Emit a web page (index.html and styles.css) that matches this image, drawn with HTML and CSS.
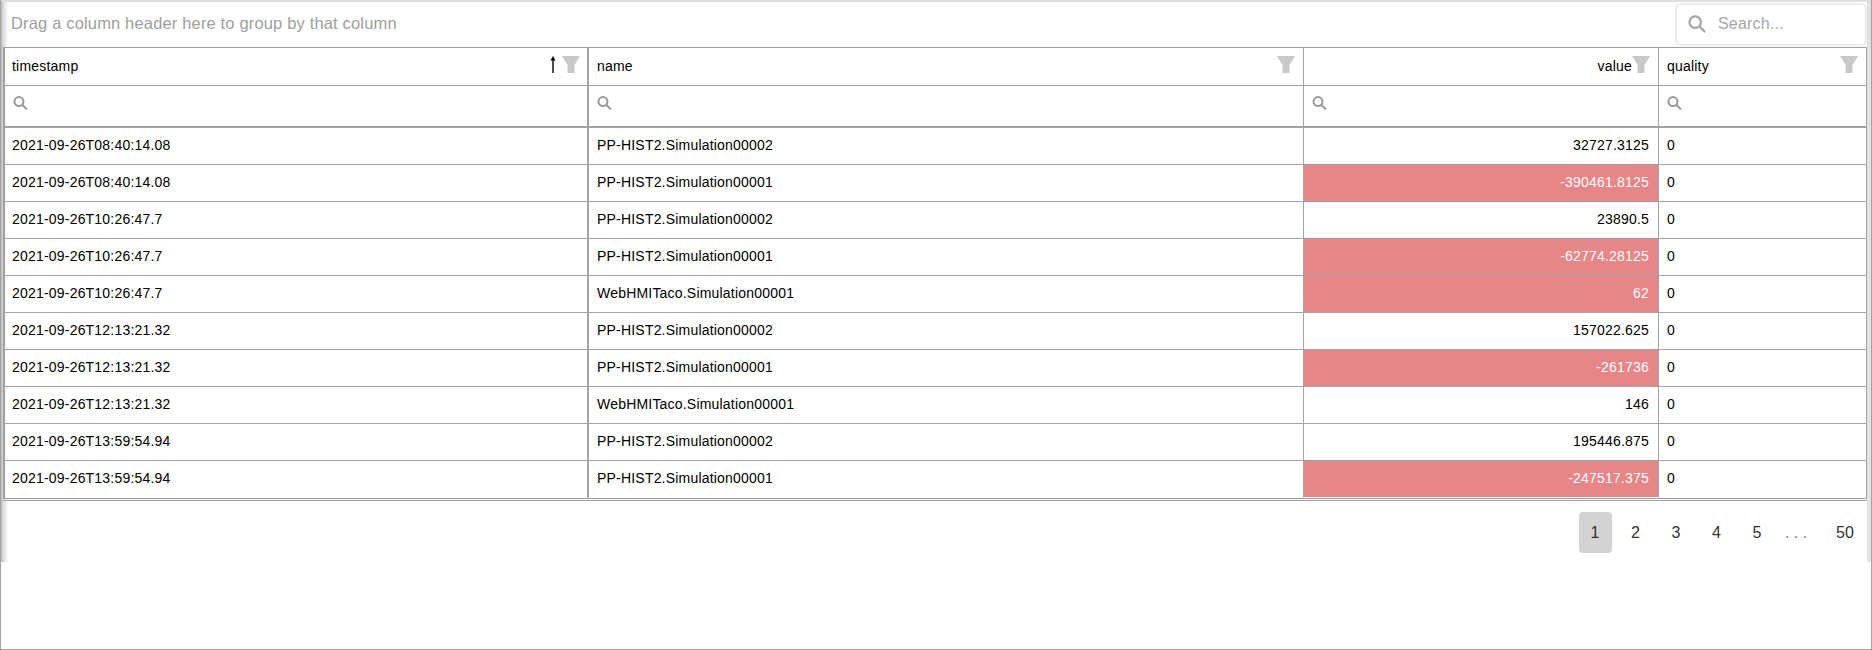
FILE: index.html
```html
<!DOCTYPE html>
<html lang="en">
<head>
<meta charset="utf-8">
<title>Grid</title>
<link rel="stylesheet" href="styles.css">
</head>
<body>
<div class="frame">
  <div class="widget">
    <div class="toolbar">
      <div class="group-hint">Drag a column header here to group by that column</div>
      <div class="search">
        <svg class="search-icon" viewBox="0 0 20 20"><circle cx="8" cy="8" r="6.4"/><path d="M12.6 12.6 19 19"/></svg>
        <span class="placeholder">Search...</span>
      </div>
    </div>
    <table class="grid">
      <colgroup><col class="c1"><col class="c2"><col class="c3"><col class="c4"></colgroup>
      <thead>
        <tr class="head">
          <th><div class="hcell first"><span class="title">timestamp</span><svg class="sort" viewBox="0 0 6 17"><path d="M3 17V3"/><path class="tip" d="M3 0 5.5 4.5H.5Z"/></svg><svg class="funnel" viewBox="0 0 18 17"><path d="M0 0H18L12.5 9V17H5.5V9Z"/></svg></div></th>
          <th><div class="hcell"><span class="title">name</span><svg class="funnel" viewBox="0 0 18 17"><path d="M0 0H18L12.5 9V17H5.5V9Z"/></svg></div></th>
          <th><div class="hcell end"><span class="title">value</span><svg class="funnel" viewBox="0 0 18 17"><path d="M0 0H18L12.5 9V17H5.5V9Z"/></svg></div></th>
          <th><div class="hcell"><span class="title">quality</span><svg class="funnel" viewBox="0 0 18 17"><path d="M0 0H18L12.5 9V17H5.5V9Z"/></svg></div></th>
        </tr>
        <tr class="filters">
          <th><svg class="mini" viewBox="0 0 15 14"><circle cx="6" cy="5.6" r="4.5"/><path d="M9.2 8.8 14 13.4"/></svg></th>
          <th><svg class="mini" viewBox="0 0 15 14"><circle cx="6" cy="5.6" r="4.5"/><path d="M9.2 8.8 14 13.4"/></svg></th>
          <th><svg class="mini" viewBox="0 0 15 14"><circle cx="6" cy="5.6" r="4.5"/><path d="M9.2 8.8 14 13.4"/></svg></th>
          <th><svg class="mini" viewBox="0 0 15 14"><circle cx="6" cy="5.6" r="4.5"/><path d="M9.2 8.8 14 13.4"/></svg></th>
        </tr>
      </thead>
      <tbody>
        <tr><td>2021-09-26T08:40:14.08</td><td>PP-HIST2.Simulation00002</td><td class="num">32727.3125</td><td>0</td></tr>
        <tr><td>2021-09-26T08:40:14.08</td><td>PP-HIST2.Simulation00001</td><td class="num alarm">-390461.8125</td><td>0</td></tr>
        <tr><td>2021-09-26T10:26:47.7</td><td>PP-HIST2.Simulation00002</td><td class="num">23890.5</td><td>0</td></tr>
        <tr><td>2021-09-26T10:26:47.7</td><td>PP-HIST2.Simulation00001</td><td class="num alarm">-62774.28125</td><td>0</td></tr>
        <tr><td>2021-09-26T10:26:47.7</td><td>WebHMITaco.Simulation00001</td><td class="num alarm">62</td><td>0</td></tr>
        <tr><td>2021-09-26T12:13:21.32</td><td>PP-HIST2.Simulation00002</td><td class="num">157022.625</td><td>0</td></tr>
        <tr><td>2021-09-26T12:13:21.32</td><td>PP-HIST2.Simulation00001</td><td class="num alarm">-261736</td><td>0</td></tr>
        <tr><td>2021-09-26T12:13:21.32</td><td>WebHMITaco.Simulation00001</td><td class="num">146</td><td>0</td></tr>
        <tr><td>2021-09-26T13:59:54.94</td><td>PP-HIST2.Simulation00002</td><td class="num">195446.875</td><td>0</td></tr>
        <tr><td>2021-09-26T13:59:54.94</td><td>PP-HIST2.Simulation00001</td><td class="num alarm">-247517.375</td><td>0</td></tr>
      </tbody>
    </table>
    <div class="pager">
      <span class="page current">1</span>
      <span class="page">2</span>
      <span class="page">3</span>
      <span class="page">4</span>
      <span class="page">5</span>
      <span class="page dots">. . .</span>
      <span class="page wide">50</span>
    </div>
  </div>
</div>
</body>
</html>
```
FILE: styles.css
```css
* { box-sizing: border-box; }
html, body { margin: 0; background: #fff; }
body { font-family: "Liberation Sans", Arial, sans-serif; color: #000; }
.frame { height: 650px; border: 1px solid #a3a3a3; border-top: 0; overflow: hidden; }
.widget {
  height: 562px;
  border-top: 2px solid #dedede;
  background:
    linear-gradient(#e2e2e2, #e2e2e2) right top / 4px 100% no-repeat,
    linear-gradient(to right, #bababa 0, #d8d8d8 2px, #f0f0f0 5px, #fff 8px);
  padding: 1px 4px 0 2px;
}
.toolbar { height: 44px; display: flex; justify-content: space-between; align-items: flex-start; }
.group-hint { font-size: 16.5px; letter-spacing: .16px; color: #a0a0a0; padding: 10px 0 0 8px; line-height: 20px; }
.search {
  width: 192px; height: 43px;
  border: 2px solid #ececec; border-radius: 6px;
  display: flex; align-items: center; gap: 12px; padding: 0 0 2px 11px;
  background: #fff;
}
.search-icon { width: 18px; height: 18px; fill: none; stroke: #a6a6a6; stroke-width: 2.5; }
.placeholder { font-size: 16px; letter-spacing: .2px; color: #a6a6a6; }
.grid { table-layout: fixed; width: 1864px; border-collapse: separate; border-spacing: 0; background: #fff; border: solid #a0a0a0; border-width: 1px 1px 1px 2px; font-size: 14px; letter-spacing: .2px; }
.c1 { width: 584px; } .c2 { width: 715px; } .c3 { width: 355px; } .c4 { width: 207px; }
.grid th, .grid td { padding: 0; border-right: 1px solid #a3a3a3; border-bottom: 1px solid #a3a3a3; font-weight: 400; text-align: left; vertical-align: middle; overflow: hidden; white-space: nowrap; }
.grid tr > :first-child { border-right-width: 2px; }
.grid tr > :last-child { border-right: 0; }
.head th { height: 38px; }
.hcell { display: flex; align-items: flex-start; padding: 0 8px; height: 37px; }
.hcell.first { padding: 0 7px; }
.hcell .title { flex: 1; line-height: 37px; }
.hcell.end .title { text-align: right; }
.sort { width: 6px; height: 17px; margin: 8px 6px 0 0; fill: #000; stroke: #000; stroke-width: 1.4; flex: none; }
.sort .tip { stroke: none; }
.funnel { width: 18px; height: 17px; margin-top: 8px; fill: #c9c9c9; flex: none; }
.grid .filters th { height: 42px; border-bottom-width: 2px; padding: 10px 0 0 8px; vertical-align: top; }
.mini { display: block; width: 15px; height: 14px; fill: none; stroke: #9a9a9a; stroke-width: 2; }
.grid td { height: 37px; padding: 0 8px 2px; }
.grid td:first-child { padding-left: 7px; }
.grid tbody tr:last-child td { border-bottom-color: #fff; }
.grid td.num { text-align: right; padding-right: 9px; }
.grid td.alarm { background: #e68686; color: #fff; }
.pager { display: flex; justify-content: flex-end; align-items: flex-start; margin-top: 1px; border-top: 1px solid #a3a3a3; padding: 11px 5.5px 0 0; font-size: 16px; color: #333; }
.page { width: 33px; height: 41px; margin-left: 7.5px; border-radius: 4px; display: flex; align-items: center; justify-content: center; }
.current { background: #d3d3d3; }
.dots { color: #777; margin-left: 6px; }
.wide { margin-left: 16px; }
```
